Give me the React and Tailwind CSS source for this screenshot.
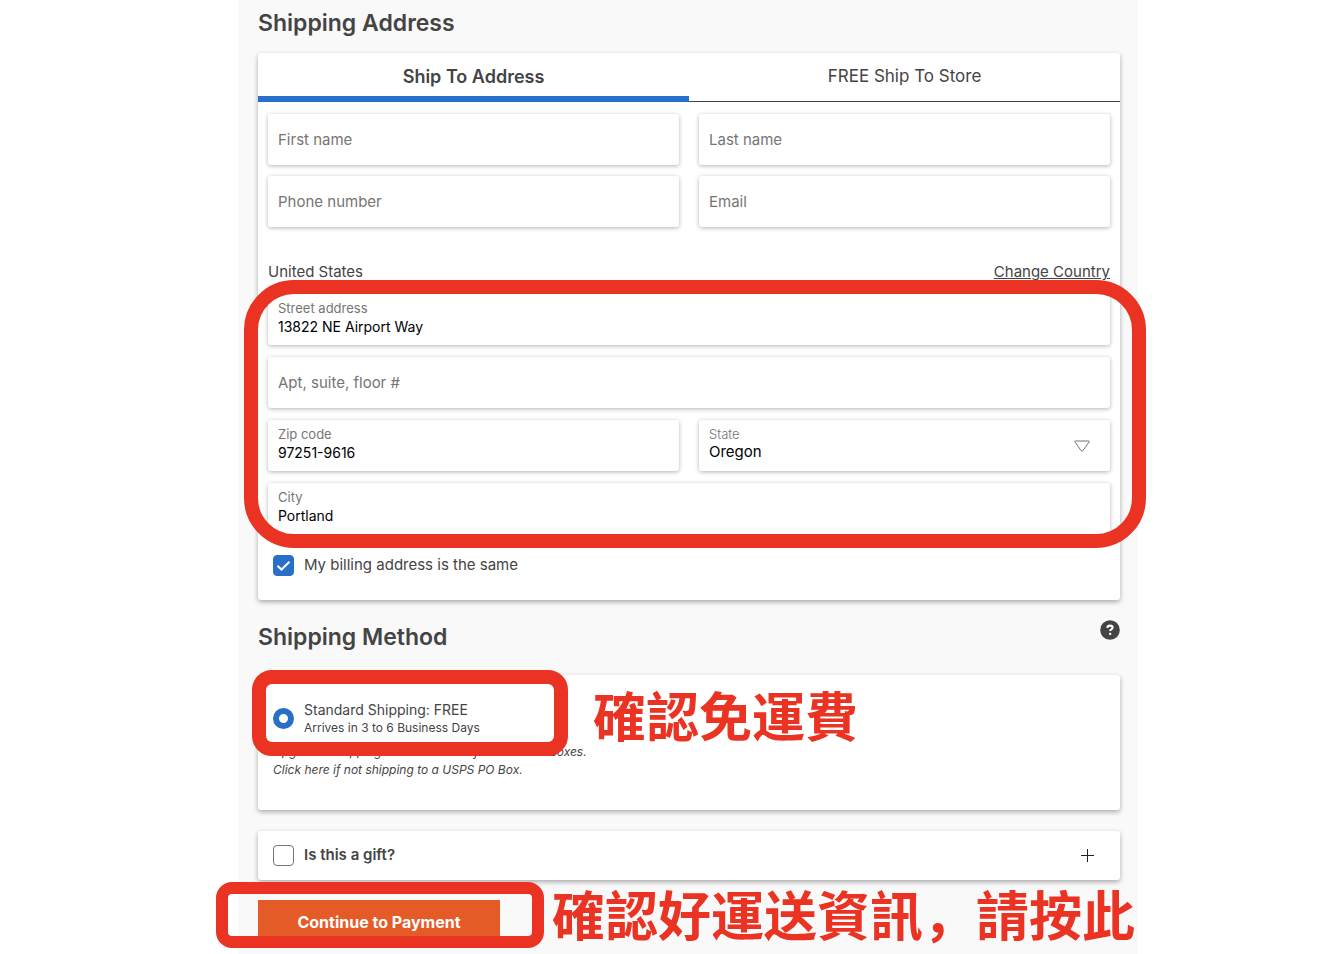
import React, { useState } from 'react'

const CARD = 'rounded-[3px] bg-white shadow-[0_2px_5px_rgba(0,0,0,0.32)]'
const FIELD = 'h-[51px] rounded-[3px] bg-white shadow-[0_1px_4px_rgba(0,0,0,0.3)]'

// Text box whose label moves above the value once it is filled in
function Field({ id, label, value, onChange, className = '' }) {
  if (!value) {
    return (
      <div className={`${FIELD} ${className}`}>
        <input
          id={id}
          type="text"
          aria-label={label}
          placeholder={label}
          value={value}
          onChange={e => onChange(id, e.target.value)}
          className="h-full w-full bg-transparent px-2.5 text-[15px] text-black outline-none placeholder:text-[#757575]"
        />
      </div>
    )
  }
  return (
    <div className={`${FIELD} flex flex-col px-2.5 pt-1.5 ${className}`}>
      <label htmlFor={id} className="text-[13px] leading-4 text-[#757575]">{label}</label>
      <input
        id={id}
        type="text"
        value={value}
        onChange={e => onChange(id, e.target.value)}
        className="h-[21px] w-full bg-transparent text-[14px] text-black outline-none"
      />
    </div>
  )
}

function CheckBox({ id, checked, onChange }) {
  return (
    <span className="relative flex size-[21px] shrink-0">
      <input
        id={id}
        type="checkbox"
        checked={checked}
        onChange={e => onChange(e.target.checked)}
        className="size-full appearance-none rounded-[4px] border border-[#757575] bg-white checked:border-[#276fc9] checked:bg-[#276fc9]"
      />
      {checked && (
        <svg viewBox="0 0 21 21" className="pointer-events-none absolute inset-0" fill="none" stroke="#fff" strokeWidth="2">
          <path d="M4.5 10.8l4 3.7 8-7.8" />
        </svg>
      )}
    </span>
  )
}

export default function App() {
  const [tab, setTab] = useState('address')
  const [sameBilling, setSameBilling] = useState(true)
  const [gift, setGift] = useState(false)
  const [form, setForm] = useState({
    firstName: '',
    lastName: '',
    phone: '',
    email: '',
    street: '13822 NE Airport Way',
    apt: '',
    zip: '97251-9616',
    state: 'Oregon',
    city: 'Portland'
  })

  function update(id, value) {
    setForm({ ...form, [id]: value })
  }

  function tabClass(name) {
    return tab === name
      ? 'h-[49px] border-b-[6px] border-[#276fc9] pt-1 text-[18px] font-semibold'
      : 'h-[49px] border-b border-[#444] text-[17px]'
  }

  return (
    <div className="flex min-h-screen justify-center overflow-hidden bg-white pl-10 font-['Inter','Noto_Sans_CJK_SC',sans-serif] text-[#444]">
      <main className="w-full max-w-[900px] bg-[#f9f9f9] pr-[18px] pl-5">
        <h2 className="pt-2 text-[23px] leading-[30px] font-semibold">Shipping Address</h2>

        <section className={`mt-[15px] h-[547px] ${CARD}`}>
          <div className="grid grid-cols-2">
            <button type="button" className={tabClass('address')} onClick={() => setTab('address')}>
              Ship To Address
            </button>
            <button type="button" className={tabClass('store')} onClick={() => setTab('store')}>
              FREE Ship To Store
            </button>
          </div>

          <div className="px-2.5 pt-3">
            <div className="grid grid-cols-2 gap-x-5 gap-y-[11px]">
              <Field id="firstName" label="First name" value={form.firstName} onChange={update} />
              <Field id="lastName" label="Last name" value={form.lastName} onChange={update} />
              <Field id="phone" label="Phone number" value={form.phone} onChange={update} />
              <Field id="email" label="Email" value={form.email} onChange={update} />
            </div>

            <div className="mt-[35px] flex justify-between text-[15px] leading-5">
              <span>United States</span>
              <a href="#country" className="underline">Change Country</a>
            </div>

            <div className="relative mt-3 grid grid-cols-2 gap-x-5 gap-y-3">
              <Field id="street" label="Street address" value={form.street} onChange={update} className="col-span-2" />
              <Field id="apt" label="Apt, suite, floor #" value={form.apt} onChange={update} className="col-span-2" />
              <Field id="zip" label="Zip code" value={form.zip} onChange={update} />
              <div className={`${FIELD} relative flex flex-col px-2.5 pt-1.5`}>
                <label htmlFor="state" className="text-[13px] leading-4 font-light text-[#757575]">State</label>
                <select
                  id="state"
                  value={form.state}
                  onChange={e => update('state', e.target.value)}
                  className="h-5 w-full appearance-none bg-transparent text-[15px] leading-5 text-black outline-none"
                >
                  <option>Oregon</option>
                  <option>Washington</option>
                </select>
                <svg viewBox="0 0 16 12" className="pointer-events-none absolute top-5 right-5 h-3 w-4" fill="none" stroke="#757575">
                  <path d="M1.3 1h13.4q.9 0 .5.8L9 10.5q-1 1-2 0L.8 1.8Q.4 1 1.3 1z" />
                </svg>
              </div>
              <Field id="city" label="City" value={form.city} onChange={update} className="col-span-2" />
              <div className="pointer-events-none absolute -top-3.5 -right-9 -bottom-3.5 -left-6 rounded-[50px] border-[14px] border-[#ea3323]" />
            </div>

            <div className="mt-5 flex items-center gap-2.5 px-[5px]">
              <CheckBox id="sameBilling" checked={sameBilling} onChange={setSameBilling} />
              <label htmlFor="sameBilling" className="text-[15px]">My billing address is the same</label>
            </div>
          </div>
        </section>

        <div className="mt-5 flex justify-between">
          <h2 className="pt-0.5 text-[23px] leading-[30px] font-semibold">Shipping Method</h2>
          <button type="button" aria-label="Shipping help" className="size-5">
            <svg viewBox="0 0 20 20">
              <circle cx="10" cy="10" r="9.8" fill="#444" />
              <path d="M7.4 7.9q.1-2.3 2.7-2.3 2.5 0 2.5 2 0 1.1-1.3 1.8-1.2.6-1.2 1.7" fill="none" stroke="#fff" strokeWidth="2.1" />
              <rect x="9" y="12.7" width="2.3" height="2.4" rx=".8" fill="#fff" />
            </svg>
          </button>
        </div>

        <section className={`relative mt-[23px] h-[135px] px-[15px] pt-[25px] ${CARD}`}>
          <div className="flex items-center gap-2.5">
            <input
              id="standard"
              type="radio"
              name="method"
              defaultChecked
              className="size-[21px] shrink-0 appearance-none rounded-full border border-[#757575] bg-white checked:border-[6px] checked:border-[#276fc9]"
            />
            <label htmlFor="standard" className="flex flex-col">
              <span className="text-[14px] leading-5">Standard Shipping: FREE</span>
              <span className="text-[12px] leading-4">Arrives in 3 to 6 Business Days</span>
            </label>
          </div>
          <p className="mt-[7px] text-[12px] leading-[18px] italic">
            Upgraded shipping is not available for USPS PO Boxes.
            <br />
            <a href="#po-box">Click here if not shipping to a USPS PO Box.</a>
          </p>
          <div className="pointer-events-none absolute -top-[5px] -left-1.5 h-[86px] w-[316px] rounded-[20px] border-[14px] border-[#ea3323]" />
          <p className="absolute top-1 left-[335px] text-[53px] leading-[78px] font-bold whitespace-nowrap text-[#ea3323]">
            確認免運費
          </p>
        </section>

        <section className={`mt-[21px] flex h-[49px] items-center gap-2.5 px-[15px] ${CARD}`}>
          <CheckBox id="gift" checked={gift} onChange={setGift} />
          <label htmlFor="gift" className="text-[15px] font-semibold">Is this a gift?</label>
          <button type="button" aria-label="Show gift options" className="mr-[11px] ml-auto">
            <svg viewBox="0 0 13 13" className="size-[13px]" stroke="#222">
              <path d="M6.5 0v13M0 6.5h13" />
            </svg>
          </button>
        </section>

        <div className="relative mt-5">
          <button type="button" className="h-11 w-[242px] bg-[#e45b28] text-[16px] font-bold text-white">
            Continue to Payment
          </button>
          <div className="pointer-events-none absolute -top-[18px] -left-[42px] h-[66px] w-[328px] rounded-[16px] border-[12px] border-[#ea3323]" />
          <p className="absolute -top-[22px] left-[294px] text-[53px] leading-[78px] font-bold whitespace-nowrap text-[#ea3323]">
            確認好運送資訊，請按此
          </p>
        </div>
      </main>
    </div>
  )
}
